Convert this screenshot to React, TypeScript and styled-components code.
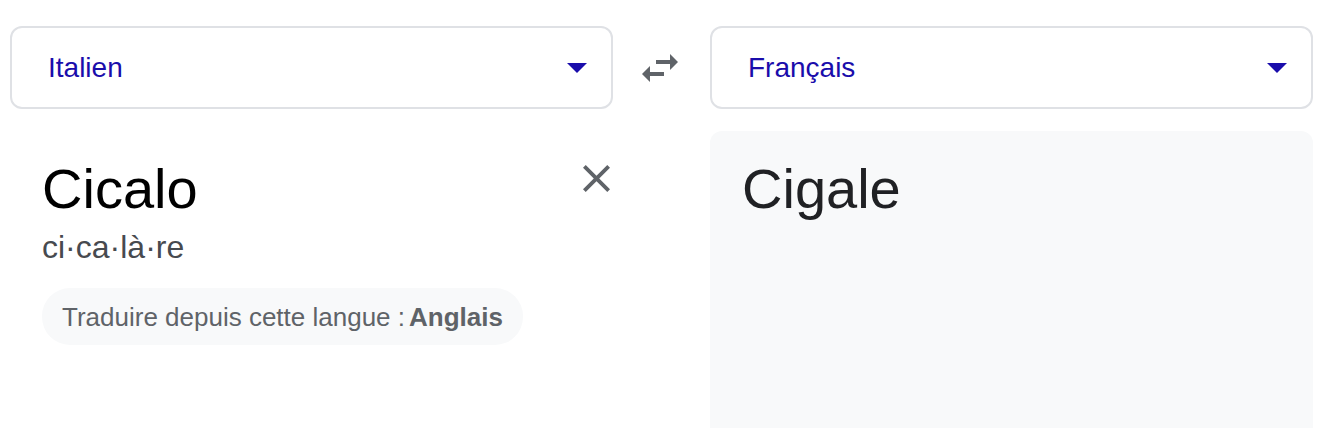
import styled, { createGlobalStyle } from "styled-components";

const GlobalStyle = createGlobalStyle`
  html, body {
    margin: 0;
    padding: 0;
    background: #ffffff;
    overflow: hidden;
  }
  body {
    font-family: "Liberation Sans", Arial, sans-serif;
  }
`;

const Page = styled.div`
  padding: 26px 13px 0 10px;
`;

const Grid = styled.div`
  display: grid;
  grid-template-columns: 1fr 97px 1fr;
  row-gap: 22px;
`;

const Select = styled.button`
  display: flex;
  align-items: center;
  justify-content: space-between;
  height: 83px;
  padding: 0 24px 0 36px;
  background: #ffffff;
  border: 2px solid #dfe1e5;
  border-radius: 12px;
  font-family: inherit;
  font-size: 28px;
  color: #1a0dab;
  cursor: pointer;
`;

const SwapButton = styled.button`
  display: flex;
  align-items: center;
  justify-content: center;
  background: none;
  border: none;
  padding: 0 3px 0 0;
  color: #5f6368;
  cursor: pointer;
`;

const SourcePanel = styled.div`
  display: flex;
  flex-direction: column;
  align-items: flex-start;
  padding: 26px 3px 0 32px;
`;

const TopRow = styled.div`
  display: flex;
  justify-content: space-between;
  align-items: flex-start;
  align-self: stretch;
`;

const BigText = styled.div<{ $color: string }>`
  font-size: 56px;
  line-height: 64px;
  color: ${(p) => p.$color};
`;

const CloseButton = styled.button`
  display: flex;
  background: none;
  border: none;
  padding: 0;
  margin-top: 8px;
  color: #5f6368;
  cursor: pointer;
`;

const Syllables = styled.div`
  margin-top: 8px;
  font-size: 32px;
  line-height: 36px;
  color: #474a4f;
`;

const Chip = styled.div`
  display: flex;
  align-items: center;
  height: 56px;
  margin-top: 23px;
  padding: 1px 20px 0;
  border-radius: 28px;
  background: #f8f9fa;
  font-size: 26px;
  color: #5f6368;

  b {
    margin-left: 4px;
    font-weight: 700;
  }
`;

const ResultPanel = styled.div`
  grid-column: 3;
  min-height: 330px;
  padding: 26px 32px 0;
  background: #f8f9fa;
  border-radius: 12px;
`;

const Caret = () => (
  <svg width="20" height="10" viewBox="7 10 10 5" fill="#1a0dab">
    <path d="M7 10l5 5 5-5z" />
  </svg>
);

const App = () => {
  return (
    <Page>
      <GlobalStyle />
      <Grid>
        <Select>
          <span>Italien</span>
          <Caret />
        </Select>
        <SwapButton aria-label="Inverser les langues">
          <svg width="36" height="28" viewBox="3 5 18 14" fill="currentColor">
            <path d="M6.99 11L3 15l3.99 4v-3H14v-2H6.99v-3zM21 9l-3.99-4v3H10v2h7.01v3L21 9z" />
          </svg>
        </SwapButton>
        <Select>
          <span>Français</span>
          <Caret />
        </Select>

        <SourcePanel>
          <TopRow>
            <BigText $color="#000000">Cicalo</BigText>
            <CloseButton aria-label="Effacer">
              <svg width="27" height="27" viewBox="5 5 14 14" fill="currentColor">
                <path d="M19 6.41L17.59 5 12 10.59 6.41 5 5 6.41 10.59 12 5 17.59 6.41 19 12 13.41 17.59 19 19 17.59 13.41 12z" />
              </svg>
            </CloseButton>
          </TopRow>
          <Syllables>ci·ca·là·re</Syllables>
          <Chip>
            Traduire depuis cette langue :<b>Anglais</b>
          </Chip>
        </SourcePanel>
        <ResultPanel>
          <BigText $color="#202124">Cigale</BigText>
        </ResultPanel>
      </Grid>
    </Page>
  );
};

export default App;
